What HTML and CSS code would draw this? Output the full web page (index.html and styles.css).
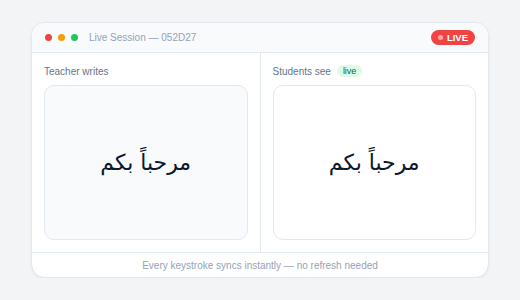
FILE: index.html
```html
<!DOCTYPE html>
<html lang="en">

<head>
  <meta charset="UTF-8">
  <title>Live Session</title>
  <link rel="stylesheet" href="styles.css">
</head>

<body>
  <div class="card">
    <div class="bar">
      <i class="dot red"></i>
      <i class="dot amber"></i>
      <i class="dot green"></i>
      <span class="title">Live Session — 052D27</span>
      <span class="live"><i></i>LIVE</span>
    </div>
    <div class="panes">
      <div class="pane">
        <p class="label">Teacher writes</p>
        <div class="box teacher" dir="rtl">مرحباً بكم</div>
      </div>
      <div class="pane">
        <p class="label">Students see <span class="tag">live</span></p>
        <div class="box" dir="rtl">مرحباً بكم</div>
      </div>
    </div>
    <div class="foot">Every keystroke syncs instantly — no refresh needed</div>
  </div>
</body>

</html>
```

FILE: styles.css
```css
body {
  margin: 0;
  background: #f3f4f6;
  font-family: "Liberation Sans", Arial, sans-serif;
}

.card {
  width: 456px;
  height: 254px;
  margin: 22px 0 0 31px;
  background: #fff;
  border: 1px solid #e2e8f0;
  border-radius: 14px;
  overflow: hidden;
  display: flex;
  flex-direction: column;
  box-shadow: 0 1px 3px rgba(15, 23, 42, 0.06);
}

.bar {
  height: 29px;
  background: #f8fafc;
  border-bottom: 1px solid #e2e8f0;
  display: flex;
  align-items: center;
  padding: 0 13px 0 13px;
}

.dot {
  width: 7px;
  height: 7px;
  border-radius: 50%;
  margin-right: 6px;
}

.red { background: #ef4444; }
.amber { background: #f59e0b; }
.green { background: #22c55e; }

.title {
  margin-left: 5px;
  font-size: 10px;
  color: #94a3b8;
}

.live {
  margin-left: auto;
  background: #ef4444;
  color: #fff;
  font-size: 9.5px;
  font-weight: bold;
  height: 15px;
  padding: 0 7px 0 7px;
  border-radius: 8px;
  display: flex;
  align-items: center;
  gap: 4px;
}

.live i {
  width: 5px;
  height: 5px;
  border-radius: 50%;
  background: #fca5a5;
}

.panes {
  flex: 1;
  display: flex;
  border-bottom: 1px solid #e2e8f0;
}

.pane {
  flex: 1;
  padding: 12px 12px 12px 12px;
  display: flex;
  flex-direction: column;
}

.pane + .pane {
  border-left: 1px solid #e2e8f0;
}

.label {
  margin: 0 0 8px 0;
  height: 12px;
  font-size: 10px;
  color: #64748b;
  display: flex;
  align-items: center;
  gap: 6px;
}

.tag {
  background: #dcfce7;
  color: #166534;
  font-size: 9px;
  padding: 1px 6px;
  border-radius: 7px;
}

.box {
  flex: 1;
  border: 1px solid #e2e8f0;
  border-radius: 10px;
  display: flex;
  align-items: center;
  justify-content: center;
  font-family: "DejaVu Sans", sans-serif;
  font-size: 22px;
  color: #0f172a;
}

.teacher {
  background: #f8fafc;
}

.foot {
  height: 24px;
  display: flex;
  align-items: center;
  justify-content: center;
  font-size: 10px;
  color: #94a3b8;
}
```
